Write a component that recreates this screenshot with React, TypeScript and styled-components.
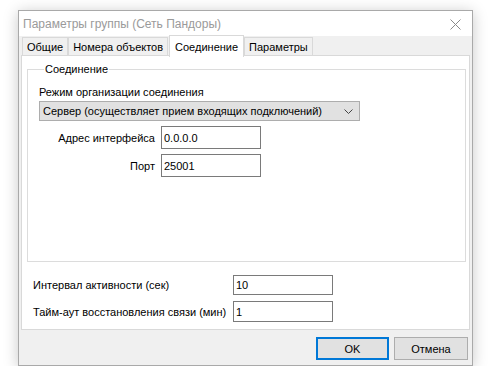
import React from "react";
import styled, { createGlobalStyle } from "styled-components";

const GlobalStyle = createGlobalStyle`
  html, body {
    margin: 0;
    background: #ffffff;
  }
  body {
    font-family: "Liberation Sans", Arial, sans-serif;
    font-size: 11px;
    color: #000;
  }
`;

const tabs = ["Общие", "Номера объектов", "Соединение", "Параметры"];

const App = () => {
  const [active, setActive] = React.useState(2);

  return (
    <>
      <GlobalStyle />
      <StyledPage>
        <StyledWindow>
          <StyledTitleBar>
            <StyledTitle>Параметры группы (Сеть Пандоры)</StyledTitle>
            <StyledClose>
              <svg width="11" height="11" viewBox="0 0 11 11">
                <path d="M0.5 0.5 L10.5 10.5 M10.5 0.5 L0.5 10.5" stroke="#8a8a8a" strokeWidth="1" />
              </svg>
            </StyledClose>
          </StyledTitleBar>

          <StyledBody>
            <StyledTabStrip>
              {tabs.map((t, i) => (
                <StyledTab key={t} $active={i === active} onClick={() => setActive(i)}>
                  {t}
                </StyledTab>
              ))}
            </StyledTabStrip>

            <StyledTabPanel>
              <StyledGroup>
                <StyledLegend>Соединение</StyledLegend>
                <StyledCaption>Режим организации соединения</StyledCaption>
                <StyledCombo>
                  <span>Сервер (осуществляет прием входящих подключений)</span>
                  <svg width="9" height="5" viewBox="0 0 9 5">
                    <path d="M0.5 0.5 L4.5 4.5 L8.5 0.5" stroke="#444" fill="none" strokeWidth="1" />
                  </svg>
                </StyledCombo>
                <StyledAddressGrid>
                  <StyledRightLabel>Адрес интерфейса</StyledRightLabel>
                  <StyledInput $height={23} defaultValue="0.0.0.0" />
                  <StyledRightLabel>Порт</StyledRightLabel>
                  <StyledInput $height={23} defaultValue="25001" />
                </StyledAddressGrid>
              </StyledGroup>

              <StyledParamsGrid>
                <StyledLeftLabel>Интервал активности (сек)</StyledLeftLabel>
                <StyledInput $height={20} defaultValue="10" />
                <StyledLeftLabel>Тайм-аут восстановления связи (мин)</StyledLeftLabel>
                <StyledInput $height={21} defaultValue="1" />
              </StyledParamsGrid>
            </StyledTabPanel>

            <StyledFooter>
              <StyledButton $primary>OK</StyledButton>
              <StyledButton>Отмена</StyledButton>
            </StyledFooter>
          </StyledBody>
        </StyledWindow>
      </StyledPage>
    </>
  );
};

export default App;

const StyledPage = styled.div`
  padding: 10px 0 0 18px;
`;

const StyledWindow = styled.div`
  width: 453px;
  height: 354px;
  border: 1px solid #a9a9a9;
  background: #f0f0f0;
  box-shadow: 0 2px 14px rgba(0, 0, 0, 0.22);
  display: flex;
  flex-direction: column;
`;

const StyledTitleBar = styled.div`
  height: 25px;
  background: #ffffff;
  display: flex;
  align-items: center;
  justify-content: space-between;
  padding: 0 11px 0 4px;
  flex-shrink: 0;
`;

const StyledTitle = styled.span`
  color: #9a9a9a;
  font-size: 12px;
`;

const StyledClose = styled.div`
  display: flex;
  align-items: center;
  margin-top: 2px;
`;

const StyledBody = styled.div`
  flex: 1;
  display: flex;
  flex-direction: column;
  padding: 0 2px;
`;

const StyledTabStrip = styled.div`
  height: 20px;
  display: flex;
  align-items: flex-end;
  padding-left: 1px;
  position: relative;
  z-index: 1;
`;

const StyledTab = styled.div<{ $active?: boolean }>`
  height: ${(p) => (p.$active ? 22 : 19)}px;
  margin-bottom: ${(p) => (p.$active ? -1 : 0)}px;
  padding: 0 ${(p) => (p.$active ? 5 : 4)}px;
  margin-left: ${(p) => (p.$active ? 1 : 0)}px;
  display: flex;
  align-items: center;
  padding-top: ${(p) => (p.$active ? 0 : 1)}px;
  background: ${(p) => (p.$active ? "#ffffff" : "#f0f0f0")};
  border: 1px solid #d9d9d9;
  border-bottom: ${(p) => (p.$active ? "none" : "1px solid #d9d9d9")};
  & + & {
    border-left: ${(p) => (p.$active ? "1px solid #d9d9d9" : "none")};
  }
  box-sizing: border-box;
  white-space: nowrap;
  cursor: default;
`;

const StyledTabPanel = styled.div`
  height: 275px;
  box-sizing: border-box;
  background: #ffffff;
  border: 1px solid #d9d9d9;
  padding: 5px 3px 0 5px;
  margin-top: -1px;
`;

const StyledGroup = styled.fieldset`
  margin: 0;
  padding: 0 0 0 11px;
  height: 201px;
  box-sizing: border-box;
  border: 1px solid #dcdcdc;
  min-width: 0;
`;

const StyledLegend = styled.legend`
  padding: 0 1px;
  margin-left: 5px;
  line-height: 16px;
`;

const StyledCaption = styled.div`
  line-height: 16px;
  margin-top: 7px;
`;

const StyledCombo = styled.div`
  width: 321px;
  height: 20px;
  box-sizing: border-box;
  margin-top: 1px;
  border: 1px solid #adadad;
  background: #e1e1e1;
  display: flex;
  align-items: center;
  justify-content: space-between;
  padding: 0 6px 0 3px;
  white-space: nowrap;
`;

const StyledAddressGrid = styled.div`
  display: grid;
  grid-template-columns: 116px 100px;
  column-gap: 6px;
  row-gap: 5px;
  margin-top: 5px;
`;

const StyledRightLabel = styled.div`
  text-align: right;
  align-self: center;
`;

const StyledLeftLabel = styled.div`
  align-self: center;
  white-space: nowrap;
`;

const StyledInput = styled.input<{ $height: number }>`
  height: ${(p) => p.$height}px;
  width: 100px;
  box-sizing: border-box;
  border: 1px solid #7a7a7a;
  padding: 0 2px;
  margin: 0;
  font-family: inherit;
  font-size: 11px;
  color: #000;
  background: #fff;
  outline: none;
`;

const StyledParamsGrid = styled.div`
  display: grid;
  grid-template-columns: 200px 100px;
  row-gap: 6px;
  margin: 13px 0 0 6px;
`;

const StyledFooter = styled.div`
  display: flex;
  justify-content: flex-end;
  gap: 5px;
  padding: 7px 2px 0 0;
`;

const StyledButton = styled.button<{ $primary?: boolean }>`
  width: ${(p) => (p.$primary ? 73 : 74)}px;
  height: 23px;
  box-sizing: border-box;
  margin: 0;
  padding: 0;
  font-family: inherit;
  font-size: 11px;
  color: #000;
  background: #e1e1e1;
  border: ${(p) => (p.$primary ? "2px solid #0078d7" : "1px solid #adadad")};
`;
